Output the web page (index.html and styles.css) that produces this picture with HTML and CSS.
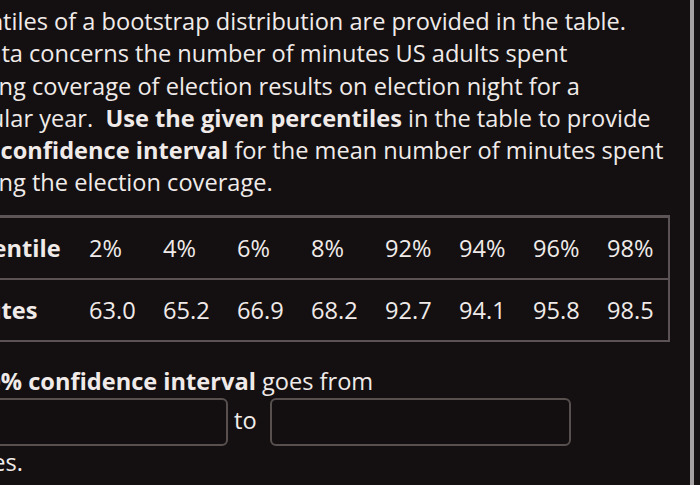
FILE: index.html
```html
<!DOCTYPE html>
<html lang="en">
<head>
<meta charset="utf-8">
<title>Bootstrap confidence interval</title>
<link rel="stylesheet" href="styles.css">
</head>
<body>
<div class="page">
  <div class="viewport">
    <div class="content">
      <p class="question">Percentiles of a bootstrap distribution are provided in the table.<br>The data concerns the number of minutes US adults spent<br>watching coverage of election results on election night for a<br>particular year.&nbsp; <b>Use the given percentiles</b> in the table to provide<br>a <b>90% confidence interval</b> for the mean number of minutes spent<br>watching the election coverage.</p>
      <table class="pct">
        <tr class="pct-row pct-row-head">
          <th class="pct-label">Percentile</th>
          <td>2%</td><td>4%</td><td>6%</td><td>8%</td><td>92%</td><td>94%</td><td>96%</td><td>98%</td>
        </tr>
        <tr class="pct-row">
          <th class="pct-label">Minutes</th>
          <td>63.0</td><td>65.2</td><td>66.9</td><td>68.2</td><td>92.7</td><td>94.1</td><td>95.8</td><td>98.5</td>
        </tr>
      </table>
      <div class="answer">
        <p class="answer-lead">The <b>90% confidence interval</b> goes from</p>
        <div class="answer-row">
          <input class="box box-from" type="text" aria-label="lower bound">
          <span class="answer-to">to</span>
          <input class="box box-to" type="text" aria-label="upper bound">
        </div>
        <p class="answer-tail">minutes.</p>
      </div>
    </div>
  </div>
  <div class="scrollbar"></div>
  <div class="gutter"></div>
</div>
</body>
</html>
```

FILE: styles.css
```css
html, body {
  margin: 0;
  padding: 0;
  background: #141011;
}

body {
  width: 700px;
  height: 485px;
  overflow: hidden;
  font-family: "Open Sans", "Noto Sans", sans-serif;
  font-size: 23.6px;
  color: #f0ebe9;
}

.page {
  display: flex;
  height: 485px;
}

.viewport {
  width: 690px;
  overflow: hidden;
  flex: none;
}

.scrollbar {
  width: 4px;
  background: #a6a2a4;
  flex: none;
}

.gutter {
  flex: 1;
  background: #171314;
}

.content {
  margin-left: -73px;
  width: 780px;
  padding-top: 5px;
}

.question {
  margin: 0;
  line-height: 32.3px;
  white-space: nowrap;
}

.question b,
.answer-lead b {
  font-weight: 700;
}

.pct {
  margin-top: 16px;
  margin-left: 1px;
  border-collapse: collapse;
  border-top: 3px solid #5c5455;
  border-right: 2px solid #5a5253;
  border-bottom: 2px solid #5a5253;
  table-layout: fixed;
}

.pct-row + .pct-row {
  border-top: 2px solid #5a5253;
}

.pct th,
.pct td {
  padding: 0 0 0 13px;
  height: 60px;
  text-align: left;
  font-weight: 400;
  line-height: 32px;
  white-space: nowrap;
}

.pct .pct-label {
  width: 135px;
  font-weight: 700;
}

.pct td {
  width: 61px;
}

.answer {
  margin-top: 23px;
}

.answer-lead,
.answer-tail {
  margin: 0;
  line-height: 32.3px;
  white-space: nowrap;
}

.answer-row {
  display: flex;
  align-items: center;
  margin-top: 1px;
  height: 48px;
}

.box {
  box-sizing: border-box;
  height: 48px;
  border: 2px solid #57504f;
  border-radius: 6px;
  background: #130f10;
  margin: 0;
  padding: 0 10px;
  color: #f0ebe9;
  font: inherit;
}

.box-from {
  width: 301px;
}

.answer-to {
  margin: 0 13px 4px 6px;
  line-height: 32px;
}

.box-to {
  width: 301px;
}
```
